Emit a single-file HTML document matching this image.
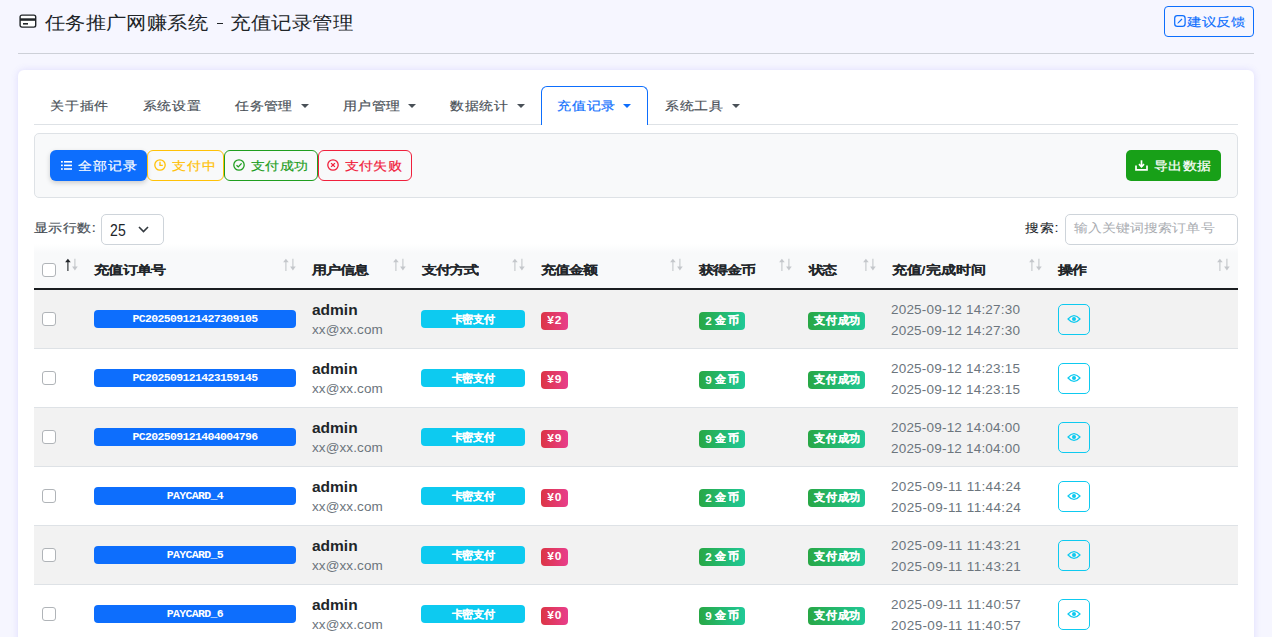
<!DOCTYPE html>
<html><head><meta charset="utf-8"><title>充值记录管理</title>
<style>
*{box-sizing:border-box;margin:0;padding:0}
html,body{width:1272px;height:637px;overflow:hidden}
body{background:#f6f6ff;font-family:"Liberation Sans",sans-serif;color:#212529;position:relative}
.a{position:absolute;white-space:nowrap}
.t{line-height:1}
</style></head><body>
<svg class="a" style="left:19px;top:14px" width="18" height="14" viewBox="0 0 18 14"><rect x="1.1" y="1.1" width="15.6" height="12" rx="1.8" fill="#fff" stroke="#212529" stroke-width="1.4"/><rect x="1" y="4.3" width="16" height="2.5" fill="#212529"/><rect x="4" y="9" width="5" height="1.6" fill="#212529"/></svg>
<div class="a t" style="left:44.65px;top:13.52px;font-size:20.00px;letter-spacing:0.450px;transform:scaleY(0.8873);transform-origin:0 0;color:#212529;">任务推广网赚系统</div>
<div class="a" style="left:217px;top:23px;width:6px;height:1.3px;background:#212529"></div>
<div class="a t" style="left:230.10px;top:13.65px;font-size:20.00px;letter-spacing:0.520px;transform:scaleY(0.8814);transform-origin:0 0;color:#212529;">充值记录管理</div>
<div class="a" style="left:1164px;top:6px;width:90px;height:31px;border:1px solid #0d6efd;border-radius:4px"></div>
<svg class="a" style="left:1173.5px;top:14.8px" width="12" height="12" viewBox="0 0 12 12"><rect x="0.7" y="0.7" width="10.4" height="10.6" rx="2.6" fill="none" stroke="#0d6efd" stroke-width="1.25"/><path d="M3.3 8.7 L4 7.2 L7.6 3.6 L8.4 4.4 L4.8 8 Z" fill="#0d6efd"/></svg>
<div class="a t" style="left:1187.40px;top:15.38px;font-size:15.00px;letter-spacing:-0.500px;transform:scaleY(0.8255);transform-origin:0 0;color:#0d6efd;-webkit-text-stroke:.15px #0d6efd">建议反馈</div>
<div class="a" style="left:18px;top:53px;width:1236px;height:1px;background:#cdd0d8"></div>
<div class="a" style="left:18px;top:70px;width:1236px;height:620px;background:#fff;border-radius:6px;box-shadow:0 0 7px rgba(105,95,245,.17)"></div>
<div class="a" style="left:34px;top:124px;width:1204px;height:1px;background:#dee2e6"></div>
<div class="a" style="left:541px;top:86px;width:107px;height:39px;border:1px solid #0d6efd;border-bottom:none;border-radius:6px 6px 0 0;background:#fff"></div>
<div class="a t" style="left:50.30px;top:100.04px;font-size:14.40px;letter-spacing:0.683px;transform:scaleY(0.8600);transform-origin:0 0;color:#495057;-webkit-text-stroke:.2px #495057">关于插件</div>
<div class="a t" style="left:142.60px;top:100.00px;font-size:14.40px;letter-spacing:0.700px;transform:scaleY(0.8600);transform-origin:0 0;color:#495057;-webkit-text-stroke:.2px #495057">系统设置</div>
<div class="a t" style="left:235.10px;top:99.93px;font-size:14.40px;letter-spacing:0.467px;transform:scaleY(0.8600);transform-origin:0 0;color:#495057;-webkit-text-stroke:.2px #495057">任务管理</div>
<div class="a" style="left:301.3px;top:104px;width:0;height:0;border-top:4px solid #495057;border-left:4px solid transparent;border-right:4px solid transparent"></div>
<div class="a t" style="left:343.00px;top:100.00px;font-size:14.40px;letter-spacing:0.333px;transform:scaleY(0.8600);transform-origin:0 0;color:#495057;-webkit-text-stroke:.2px #495057">用户管理</div>
<div class="a" style="left:408.2px;top:104px;width:0;height:0;border-top:4px solid #495057;border-left:4px solid transparent;border-right:4px solid transparent"></div>
<div class="a t" style="left:450.00px;top:100.00px;font-size:14.40px;letter-spacing:0.683px;transform:scaleY(0.8600);transform-origin:0 0;color:#495057;-webkit-text-stroke:.2px #495057">数据统计</div>
<div class="a" style="left:516.7px;top:104px;width:0;height:0;border-top:4px solid #495057;border-left:4px solid transparent;border-right:4px solid transparent"></div>
<div class="a t" style="left:557.30px;top:100.00px;font-size:14.40px;letter-spacing:0.683px;transform:scaleY(0.8600);transform-origin:0 0;color:#0d6efd;-webkit-text-stroke:.2px #0d6efd">充值记录</div>
<div class="a" style="left:623px;top:104px;width:0;height:0;border-top:4px solid #0d6efd;border-left:4px solid transparent;border-right:4px solid transparent"></div>
<div class="a t" style="left:665.20px;top:100.00px;font-size:14.40px;letter-spacing:0.633px;transform:scaleY(0.8600);transform-origin:0 0;color:#495057;-webkit-text-stroke:.2px #495057">系统工具</div>
<div class="a" style="left:731.8px;top:104px;width:0;height:0;border-top:4px solid #495057;border-left:4px solid transparent;border-right:4px solid transparent"></div>
<div class="a" style="left:34px;top:133px;width:1204px;height:65px;background:#f8f9fa;border:1px solid #dee2e6;border-radius:5px"></div>
<div class="a" style="left:50px;top:150px;width:97px;height:31px;background:#0d6efd;border-radius:6px;box-shadow:0 2px 5px rgba(0,0,0,.18)"></div>
<svg class="a" style="left:61px;top:161px" width="11" height="9" viewBox="0 0 11 9"><g fill="#fff"><rect x="0" y="0" width="1.8" height="1.6"/><rect x="3" y="0" width="8" height="1.6"/><rect x="0" y="3.6" width="1.8" height="1.6"/><rect x="3" y="3.6" width="8" height="1.6"/><rect x="0" y="7.2" width="1.8" height="1.6"/><rect x="3" y="7.2" width="8" height="1.6"/></g></svg>
<div class="a t" style="left:78.00px;top:160.00px;font-size:14.40px;letter-spacing:1.000px;transform:scaleY(0.8600);transform-origin:0 0;color:#fff;-webkit-text-stroke:.2px #fff">全部记录</div>
<div class="a" style="left:147px;top:150px;width:77px;height:31px;border:1px solid #ffc107;border-radius:6px"></div>
<svg class="a" style="left:154px;top:159px" width="12" height="12" viewBox="0 0 12 12"><circle cx="6" cy="6" r="5.2" fill="none" stroke="#ffc107" stroke-width="1.3"/><path d="M6 2.8 V6.3 H8.8" fill="none" stroke="#ffc107" stroke-width="1.3"/></svg>
<div class="a t" style="left:172.00px;top:160.00px;font-size:14.40px;letter-spacing:1.000px;transform:scaleY(0.8600);transform-origin:0 0;color:#ffc107;-webkit-text-stroke:.2px #ffc107">支付中</div>
<div class="a" style="left:224px;top:150px;width:94px;height:31px;border:1px solid #1f9e1f;border-radius:6px"></div>
<svg class="a" style="left:233px;top:159px" width="12" height="12" viewBox="0 0 12 12"><circle cx="6" cy="6" r="5.2" fill="none" stroke="#1f9e1f" stroke-width="1.3"/><path d="M3.5 6.2 L5.3 7.9 L8.6 4.4" fill="none" stroke="#1f9e1f" stroke-width="1.3"/></svg>
<div class="a t" style="left:251.20px;top:159.77px;font-size:14.40px;letter-spacing:0.233px;transform:scaleY(0.8583);transform-origin:0 0;color:#1f9e1f;-webkit-text-stroke:.2px #1f9e1f">支付成功</div>
<div class="a" style="left:318px;top:150px;width:94px;height:31px;border:1px solid #f0203c;border-radius:6px"></div>
<svg class="a" style="left:327px;top:159px" width="12" height="12" viewBox="0 0 12 12"><circle cx="6" cy="6" r="5.2" fill="none" stroke="#f0203c" stroke-width="1.3"/><path d="M4.1 4.1 L7.9 7.9 M7.9 4.1 L4.1 7.9" fill="none" stroke="#f0203c" stroke-width="1.3"/></svg>
<div class="a t" style="left:344.75px;top:160.17px;font-size:14.40px;letter-spacing:0.300px;transform:scaleY(0.8601);transform-origin:0 0;color:#f0203c;-webkit-text-stroke:.2px #f0203c">支付失败</div>
<div class="a" style="left:1126px;top:150px;width:95px;height:31px;background:#18a018;border-radius:5px"></div>
<svg class="a" style="left:1135px;top:160px" width="13" height="11" viewBox="0 0 13 11"><path d="M1 5.5 V9.9 H12 V5.5" fill="none" stroke="#fff" stroke-width="1.7"/><path d="M6.5 0.3 V6.5" stroke="#fff" stroke-width="1.7"/><path d="M4 4.2 L6.5 6.8 L9 4.2" fill="none" stroke="#fff" stroke-width="1.7"/></svg>
<div class="a t" style="left:1154.00px;top:160.00px;font-size:14.40px;letter-spacing:0.483px;transform:scaleY(0.8600);transform-origin:0 0;color:#fff;-webkit-text-stroke:.25px #fff">导出数据</div>
<div class="a" style="left:34px;top:244px;width:1204px;height:44px;background:linear-gradient(#fff 0,#f8f9fa 9px,#f8f9fa 100%)"></div>
<div class="a t" style="left:34.00px;top:222.00px;font-size:14.40px;letter-spacing:0.425px;transform:scaleY(0.8600);transform-origin:0 0;color:#495057;-webkit-text-stroke:.2px #495057">显示行数:</div>
<div class="a" style="left:101px;top:214px;width:63px;height:31px;border:1px solid #ced4da;border-radius:5px;background:#fff"></div>
<div class="a t" style="left:109.5px;top:222px;font-size:15.6px;letter-spacing:.2px;transform:scale(.9,1.04);transform-origin:0 0;color:#212529">25</div>
<svg class="a" style="left:138px;top:226px" width="11" height="7" viewBox="0 0 11 7"><path d="M1 1 L5.5 5.6 L10 1" fill="none" stroke="#343a40" stroke-width="1.6"/></svg>
<div class="a t" style="left:1025.00px;top:222.00px;font-size:14.40px;letter-spacing:0.775px;transform:scaleY(0.8600);transform-origin:0 0;color:#212529;-webkit-text-stroke:.08px #212529">搜索:</div>
<div class="a" style="left:1065px;top:214px;width:173px;height:31px;border:1px solid #ced4da;border-radius:5px;background:#fff"></div>
<div class="a t" style="left:1073.65px;top:222.00px;font-size:14.00px;letter-spacing:0.100px;transform:scaleY(0.8600);transform-origin:0 0;color:#a8abb0;">输入关键词搜索订单号</div>
<div class="a" style="left:34px;top:288px;width:1204px;height:2px;background:#1a1d20"></div>
<div class="a" style="left:42px;top:263px;width:14px;height:14px;border:1px solid #b0b4b8;border-radius:3px;background:#fff"></div>
<svg class="a" style="left:64px;top:258px" width="14" height="13" viewBox="0 0 14 13"><path d="M3.9 12.9 V3" fill="none" stroke="#212529" stroke-width="1.1"/><path d="M1.1 4.3 L3.9 0.8 L6.7 4.3 Z" fill="#212529"/><path d="M10.9 0.8 V10" fill="none" stroke="#c4c7cb" stroke-width="1.1"/><path d="M8.1 8.6 L10.9 12.6 L13.7 8.6 Z" fill="#c4c7cb"/></svg>
<div class="a t" style="left:94.10px;top:264.00px;font-size:14.40px;letter-spacing:0.275px;transform:scaleY(0.8000);transform-origin:0 0;color:#212529;font-weight:900;-webkit-text-stroke:.1px #212529">充值订单号</div>
<svg class="a" style="left:282px;top:258px" width="14" height="13" viewBox="0 0 14 13"><path d="M3.9 12.9 V3" fill="none" stroke="#c4c7cb" stroke-width="1.1"/><path d="M1.1 4.3 L3.9 0.8 L6.7 4.3 Z" fill="#c4c7cb"/><path d="M10.9 0.8 V10" fill="none" stroke="#c4c7cb" stroke-width="1.1"/><path d="M8.1 8.6 L10.9 12.6 L13.7 8.6 Z" fill="#c4c7cb"/></svg>
<div class="a t" style="left:312.35px;top:264.00px;font-size:14.40px;letter-spacing:-0.150px;transform:scaleY(0.8000);transform-origin:0 0;color:#212529;font-weight:900;-webkit-text-stroke:.1px #212529">用户信息</div>
<svg class="a" style="left:392px;top:258px" width="14" height="13" viewBox="0 0 14 13"><path d="M3.9 12.9 V3" fill="none" stroke="#c4c7cb" stroke-width="1.1"/><path d="M1.1 4.3 L3.9 0.8 L6.7 4.3 Z" fill="#c4c7cb"/><path d="M10.9 0.8 V10" fill="none" stroke="#c4c7cb" stroke-width="1.1"/><path d="M8.1 8.6 L10.9 12.6 L13.7 8.6 Z" fill="#c4c7cb"/></svg>
<div class="a t" style="left:422.00px;top:264.00px;font-size:14.40px;letter-spacing:0.083px;transform:scaleY(0.8000);transform-origin:0 0;color:#212529;font-weight:900;-webkit-text-stroke:.1px #212529">支付方式</div>
<svg class="a" style="left:511px;top:258px" width="14" height="13" viewBox="0 0 14 13"><path d="M3.9 12.9 V3" fill="none" stroke="#c4c7cb" stroke-width="1.1"/><path d="M1.1 4.3 L3.9 0.8 L6.7 4.3 Z" fill="#c4c7cb"/><path d="M10.9 0.8 V10" fill="none" stroke="#c4c7cb" stroke-width="1.1"/><path d="M8.1 8.6 L10.9 12.6 L13.7 8.6 Z" fill="#c4c7cb"/></svg>
<div class="a t" style="left:541.00px;top:264.00px;font-size:14.40px;letter-spacing:0.067px;transform:scaleY(0.8000);transform-origin:0 0;color:#212529;font-weight:900;-webkit-text-stroke:.1px #212529">充值金额</div>
<svg class="a" style="left:669px;top:258px" width="14" height="13" viewBox="0 0 14 13"><path d="M3.9 12.9 V3" fill="none" stroke="#c4c7cb" stroke-width="1.1"/><path d="M1.1 4.3 L3.9 0.8 L6.7 4.3 Z" fill="#c4c7cb"/><path d="M10.9 0.8 V10" fill="none" stroke="#c4c7cb" stroke-width="1.1"/><path d="M8.1 8.6 L10.9 12.6 L13.7 8.6 Z" fill="#c4c7cb"/></svg>
<div class="a t" style="left:698.50px;top:264.00px;font-size:14.40px;letter-spacing:0.050px;transform:scaleY(0.8000);transform-origin:0 0;color:#212529;font-weight:900;-webkit-text-stroke:.1px #212529">获得金币</div>
<svg class="a" style="left:778px;top:258px" width="14" height="13" viewBox="0 0 14 13"><path d="M3.9 12.9 V3" fill="none" stroke="#c4c7cb" stroke-width="1.1"/><path d="M1.1 4.3 L3.9 0.8 L6.7 4.3 Z" fill="#c4c7cb"/><path d="M10.9 0.8 V10" fill="none" stroke="#c4c7cb" stroke-width="1.1"/><path d="M8.1 8.6 L10.9 12.6 L13.7 8.6 Z" fill="#c4c7cb"/></svg>
<div class="a t" style="left:808.95px;top:264.00px;font-size:14.40px;letter-spacing:-0.500px;transform:scaleY(0.8000);transform-origin:0 0;color:#212529;font-weight:900;-webkit-text-stroke:.1px #212529">状态</div>
<svg class="a" style="left:862px;top:258px" width="14" height="13" viewBox="0 0 14 13"><path d="M3.9 12.9 V3" fill="none" stroke="#c4c7cb" stroke-width="1.1"/><path d="M1.1 4.3 L3.9 0.8 L6.7 4.3 Z" fill="#c4c7cb"/><path d="M10.9 0.8 V10" fill="none" stroke="#c4c7cb" stroke-width="1.1"/><path d="M8.1 8.6 L10.9 12.6 L13.7 8.6 Z" fill="#c4c7cb"/></svg>
<div class="a t" style="left:892.00px;top:264.00px;font-size:14.40px;letter-spacing:0.757px;transform:scaleY(0.8000);transform-origin:0 0;color:#212529;font-weight:900;-webkit-text-stroke:.1px #212529">充值/完成时间</div>
<svg class="a" style="left:1028px;top:258px" width="14" height="13" viewBox="0 0 14 13"><path d="M3.9 12.9 V3" fill="none" stroke="#c4c7cb" stroke-width="1.1"/><path d="M1.1 4.3 L3.9 0.8 L6.7 4.3 Z" fill="#c4c7cb"/><path d="M10.9 0.8 V10" fill="none" stroke="#c4c7cb" stroke-width="1.1"/><path d="M8.1 8.6 L10.9 12.6 L13.7 8.6 Z" fill="#c4c7cb"/></svg>
<div class="a t" style="left:1057.90px;top:264.00px;font-size:14.40px;letter-spacing:0.300px;transform:scaleY(0.8000);transform-origin:0 0;color:#212529;font-weight:900;-webkit-text-stroke:.1px #212529">操作</div>
<svg class="a" style="left:1216px;top:258px" width="14" height="13" viewBox="0 0 14 13"><path d="M3.9 12.9 V3" fill="none" stroke="#c4c7cb" stroke-width="1.1"/><path d="M1.1 4.3 L3.9 0.8 L6.7 4.3 Z" fill="#c4c7cb"/><path d="M10.9 0.8 V10" fill="none" stroke="#c4c7cb" stroke-width="1.1"/><path d="M8.1 8.6 L10.9 12.6 L13.7 8.6 Z" fill="#c4c7cb"/></svg>
<div class="a" style="left:34px;top:290px;width:1204px;height:59px;background:#f2f2f2;border-bottom:1px solid #dee2e6"></div>
<div class="a" style="left:42px;top:312px;width:14px;height:14px;border:1px solid #b0b4b8;border-radius:3px;background:#fff"></div>
<div class="a" style="left:94px;top:310px;width:202px;height:18px;border-radius:4px;background:#0d6efd"></div>
<div class="a t" style="left:94px;top:313px;width:202px;text-align:center;font-family:'Liberation Mono',monospace;font-weight:bold;font-size:11.5px;letter-spacing:-.65px;color:#fff">PC202509121427309105</div>
<div class="a t" style="left:312px;top:302px;font-size:15.5px;font-weight:bold;color:#212529">admin</div>
<div class="a t" style="left:312px;top:323px;font-size:13.5px;letter-spacing:.1px;color:#6c757d">xx@xx.com</div>
<div class="a" style="left:421px;top:310px;width:104px;height:18px;border-radius:4px;background:#0dcaf0"></div>
<div class="a t" style="left:451.50px;top:314.15px;font-size:10.60px;letter-spacing:-0.167px;color:#fff;font-weight:900;-webkit-text-stroke:.12px #fff">卡密支付</div>
<div class="a" style="left:541px;top:312px;width:27px;height:18px;border-radius:4px;background:linear-gradient(90deg,#dc3545,#e83e8c)"></div>
<div class="a t" style="left:547.35px;top:315.48px;font-size:12.00px;letter-spacing:0.650px;transform:scaleY(0.8955);transform-origin:0 0;color:#fff;font-weight:bold">¥2</div>
<div class="a" style="left:699px;top:312px;width:46px;height:18px;border-radius:4px;background:linear-gradient(90deg,#28a745,#20c997)"></div>
<div class="a t" style="left:705.3px;top:314.50px;font-size:11.6px;font-weight:bold;color:#fff">2</div>
<div class="a t" style="left:715.00px;top:315.05px;font-size:10.80px;letter-spacing:1.800px;color:#fff;font-weight:900;-webkit-text-stroke:.15px #fff">金币</div>
<div class="a" style="left:808px;top:312px;width:57px;height:18px;border-radius:4px;background:linear-gradient(90deg,#28a745,#20c997)"></div>
<div class="a t" style="left:814.00px;top:314.75px;font-size:10.80px;letter-spacing:0.800px;color:#fff;font-weight:900;-webkit-text-stroke:.15px #fff">支付成功</div>
<div class="a t" style="left:891px;top:303px;font-size:13.5px;letter-spacing:0.20px;color:#6c757d">2025-09-12 14:27:30</div>
<div class="a t" style="left:891px;top:324px;font-size:13.5px;letter-spacing:0.20px;color:#6c757d">2025-09-12 14:27:30</div>
<div class="a" style="left:1058px;top:304px;width:32px;height:31px;border:1px solid #0dcaf0;border-radius:5px"></div>
<svg class="a" style="left:1067px;top:314px" width="14" height="10" viewBox="0 0 14 10"><path d="M1 5 Q7 -1.8 13 5 Q7 11.8 1 5 Z" fill="none" stroke="#0dcaf0" stroke-width="1.15"/><circle cx="7" cy="5" r="2" fill="#0dcaf0"/></svg>
<div class="a" style="left:34px;top:349px;width:1204px;height:59px;background:#fff;border-bottom:1px solid #dee2e6"></div>
<div class="a" style="left:42px;top:371px;width:14px;height:14px;border:1px solid #b0b4b8;border-radius:3px;background:#fff"></div>
<div class="a" style="left:94px;top:369px;width:202px;height:18px;border-radius:4px;background:#0d6efd"></div>
<div class="a t" style="left:94px;top:372px;width:202px;text-align:center;font-family:'Liberation Mono',monospace;font-weight:bold;font-size:11.5px;letter-spacing:-.65px;color:#fff">PC202509121423159145</div>
<div class="a t" style="left:312px;top:361px;font-size:15.5px;font-weight:bold;color:#212529">admin</div>
<div class="a t" style="left:312px;top:382px;font-size:13.5px;letter-spacing:.1px;color:#6c757d">xx@xx.com</div>
<div class="a" style="left:421px;top:369px;width:104px;height:18px;border-radius:4px;background:#0dcaf0"></div>
<div class="a t" style="left:451.50px;top:373.15px;font-size:10.60px;letter-spacing:-0.167px;color:#fff;font-weight:900;-webkit-text-stroke:.12px #fff">卡密支付</div>
<div class="a" style="left:541px;top:371px;width:27px;height:18px;border-radius:4px;background:linear-gradient(90deg,#dc3545,#e83e8c)"></div>
<div class="a t" style="left:547.35px;top:374.48px;font-size:12.00px;letter-spacing:0.650px;transform:scaleY(0.8955);transform-origin:0 0;color:#fff;font-weight:bold">¥9</div>
<div class="a" style="left:699px;top:371px;width:46px;height:18px;border-radius:4px;background:linear-gradient(90deg,#28a745,#20c997)"></div>
<div class="a t" style="left:705.3px;top:373.50px;font-size:11.6px;font-weight:bold;color:#fff">9</div>
<div class="a t" style="left:715.00px;top:374.05px;font-size:10.80px;letter-spacing:1.800px;color:#fff;font-weight:900;-webkit-text-stroke:.15px #fff">金币</div>
<div class="a" style="left:808px;top:371px;width:57px;height:18px;border-radius:4px;background:linear-gradient(90deg,#28a745,#20c997)"></div>
<div class="a t" style="left:814.00px;top:373.75px;font-size:10.80px;letter-spacing:0.800px;color:#fff;font-weight:900;-webkit-text-stroke:.15px #fff">支付成功</div>
<div class="a t" style="left:891px;top:362px;font-size:13.5px;letter-spacing:0.20px;color:#6c757d">2025-09-12 14:23:15</div>
<div class="a t" style="left:891px;top:383px;font-size:13.5px;letter-spacing:0.20px;color:#6c757d">2025-09-12 14:23:15</div>
<div class="a" style="left:1058px;top:363px;width:32px;height:31px;border:1px solid #0dcaf0;border-radius:5px"></div>
<svg class="a" style="left:1067px;top:373px" width="14" height="10" viewBox="0 0 14 10"><path d="M1 5 Q7 -1.8 13 5 Q7 11.8 1 5 Z" fill="none" stroke="#0dcaf0" stroke-width="1.15"/><circle cx="7" cy="5" r="2" fill="#0dcaf0"/></svg>
<div class="a" style="left:34px;top:408px;width:1204px;height:59px;background:#f2f2f2;border-bottom:1px solid #dee2e6"></div>
<div class="a" style="left:42px;top:430px;width:14px;height:14px;border:1px solid #b0b4b8;border-radius:3px;background:#fff"></div>
<div class="a" style="left:94px;top:428px;width:202px;height:18px;border-radius:4px;background:#0d6efd"></div>
<div class="a t" style="left:94px;top:431px;width:202px;text-align:center;font-family:'Liberation Mono',monospace;font-weight:bold;font-size:11.5px;letter-spacing:-.65px;color:#fff">PC202509121404004796</div>
<div class="a t" style="left:312px;top:420px;font-size:15.5px;font-weight:bold;color:#212529">admin</div>
<div class="a t" style="left:312px;top:441px;font-size:13.5px;letter-spacing:.1px;color:#6c757d">xx@xx.com</div>
<div class="a" style="left:421px;top:428px;width:104px;height:18px;border-radius:4px;background:#0dcaf0"></div>
<div class="a t" style="left:451.50px;top:432.15px;font-size:10.60px;letter-spacing:-0.167px;color:#fff;font-weight:900;-webkit-text-stroke:.12px #fff">卡密支付</div>
<div class="a" style="left:541px;top:430px;width:27px;height:18px;border-radius:4px;background:linear-gradient(90deg,#dc3545,#e83e8c)"></div>
<div class="a t" style="left:547.35px;top:433.48px;font-size:12.00px;letter-spacing:0.650px;transform:scaleY(0.8955);transform-origin:0 0;color:#fff;font-weight:bold">¥9</div>
<div class="a" style="left:699px;top:430px;width:46px;height:18px;border-radius:4px;background:linear-gradient(90deg,#28a745,#20c997)"></div>
<div class="a t" style="left:705.3px;top:432.50px;font-size:11.6px;font-weight:bold;color:#fff">9</div>
<div class="a t" style="left:715.00px;top:433.05px;font-size:10.80px;letter-spacing:1.800px;color:#fff;font-weight:900;-webkit-text-stroke:.15px #fff">金币</div>
<div class="a" style="left:808px;top:430px;width:57px;height:18px;border-radius:4px;background:linear-gradient(90deg,#28a745,#20c997)"></div>
<div class="a t" style="left:814.00px;top:432.75px;font-size:10.80px;letter-spacing:0.800px;color:#fff;font-weight:900;-webkit-text-stroke:.15px #fff">支付成功</div>
<div class="a t" style="left:891px;top:421px;font-size:13.5px;letter-spacing:0.20px;color:#6c757d">2025-09-12 14:04:00</div>
<div class="a t" style="left:891px;top:442px;font-size:13.5px;letter-spacing:0.20px;color:#6c757d">2025-09-12 14:04:00</div>
<div class="a" style="left:1058px;top:422px;width:32px;height:31px;border:1px solid #0dcaf0;border-radius:5px"></div>
<svg class="a" style="left:1067px;top:432px" width="14" height="10" viewBox="0 0 14 10"><path d="M1 5 Q7 -1.8 13 5 Q7 11.8 1 5 Z" fill="none" stroke="#0dcaf0" stroke-width="1.15"/><circle cx="7" cy="5" r="2" fill="#0dcaf0"/></svg>
<div class="a" style="left:34px;top:467px;width:1204px;height:59px;background:#fff;border-bottom:1px solid #dee2e6"></div>
<div class="a" style="left:42px;top:489px;width:14px;height:14px;border:1px solid #b0b4b8;border-radius:3px;background:#fff"></div>
<div class="a" style="left:94px;top:487px;width:202px;height:18px;border-radius:4px;background:#0d6efd"></div>
<div class="a t" style="left:94px;top:490px;width:202px;text-align:center;font-family:'Liberation Mono',monospace;font-weight:bold;font-size:11.5px;letter-spacing:-.65px;color:#fff">PAYCARD_4</div>
<div class="a t" style="left:312px;top:479px;font-size:15.5px;font-weight:bold;color:#212529">admin</div>
<div class="a t" style="left:312px;top:500px;font-size:13.5px;letter-spacing:.1px;color:#6c757d">xx@xx.com</div>
<div class="a" style="left:421px;top:487px;width:104px;height:18px;border-radius:4px;background:#0dcaf0"></div>
<div class="a t" style="left:451.50px;top:491.15px;font-size:10.60px;letter-spacing:-0.167px;color:#fff;font-weight:900;-webkit-text-stroke:.12px #fff">卡密支付</div>
<div class="a" style="left:541px;top:489px;width:27px;height:18px;border-radius:4px;background:linear-gradient(90deg,#dc3545,#e83e8c)"></div>
<div class="a t" style="left:547.35px;top:492.48px;font-size:12.00px;letter-spacing:0.650px;transform:scaleY(0.8955);transform-origin:0 0;color:#fff;font-weight:bold">¥0</div>
<div class="a" style="left:699px;top:489px;width:46px;height:18px;border-radius:4px;background:linear-gradient(90deg,#28a745,#20c997)"></div>
<div class="a t" style="left:705.3px;top:491.50px;font-size:11.6px;font-weight:bold;color:#fff">2</div>
<div class="a t" style="left:715.00px;top:492.05px;font-size:10.80px;letter-spacing:1.800px;color:#fff;font-weight:900;-webkit-text-stroke:.15px #fff">金币</div>
<div class="a" style="left:808px;top:489px;width:57px;height:18px;border-radius:4px;background:linear-gradient(90deg,#28a745,#20c997)"></div>
<div class="a t" style="left:814.00px;top:491.75px;font-size:10.80px;letter-spacing:0.800px;color:#fff;font-weight:900;-webkit-text-stroke:.15px #fff">支付成功</div>
<div class="a t" style="left:891px;top:480px;font-size:13.5px;letter-spacing:0.36px;color:#6c757d">2025-09-11 11:44:24</div>
<div class="a t" style="left:891px;top:501px;font-size:13.5px;letter-spacing:0.36px;color:#6c757d">2025-09-11 11:44:24</div>
<div class="a" style="left:1058px;top:481px;width:32px;height:31px;border:1px solid #0dcaf0;border-radius:5px"></div>
<svg class="a" style="left:1067px;top:491px" width="14" height="10" viewBox="0 0 14 10"><path d="M1 5 Q7 -1.8 13 5 Q7 11.8 1 5 Z" fill="none" stroke="#0dcaf0" stroke-width="1.15"/><circle cx="7" cy="5" r="2" fill="#0dcaf0"/></svg>
<div class="a" style="left:34px;top:526px;width:1204px;height:59px;background:#f2f2f2;border-bottom:1px solid #dee2e6"></div>
<div class="a" style="left:42px;top:548px;width:14px;height:14px;border:1px solid #b0b4b8;border-radius:3px;background:#fff"></div>
<div class="a" style="left:94px;top:546px;width:202px;height:18px;border-radius:4px;background:#0d6efd"></div>
<div class="a t" style="left:94px;top:549px;width:202px;text-align:center;font-family:'Liberation Mono',monospace;font-weight:bold;font-size:11.5px;letter-spacing:-.65px;color:#fff">PAYCARD_5</div>
<div class="a t" style="left:312px;top:538px;font-size:15.5px;font-weight:bold;color:#212529">admin</div>
<div class="a t" style="left:312px;top:559px;font-size:13.5px;letter-spacing:.1px;color:#6c757d">xx@xx.com</div>
<div class="a" style="left:421px;top:546px;width:104px;height:18px;border-radius:4px;background:#0dcaf0"></div>
<div class="a t" style="left:451.50px;top:550.15px;font-size:10.60px;letter-spacing:-0.167px;color:#fff;font-weight:900;-webkit-text-stroke:.12px #fff">卡密支付</div>
<div class="a" style="left:541px;top:548px;width:27px;height:18px;border-radius:4px;background:linear-gradient(90deg,#dc3545,#e83e8c)"></div>
<div class="a t" style="left:547.35px;top:551.48px;font-size:12.00px;letter-spacing:0.650px;transform:scaleY(0.8955);transform-origin:0 0;color:#fff;font-weight:bold">¥0</div>
<div class="a" style="left:699px;top:548px;width:46px;height:18px;border-radius:4px;background:linear-gradient(90deg,#28a745,#20c997)"></div>
<div class="a t" style="left:705.3px;top:550.50px;font-size:11.6px;font-weight:bold;color:#fff">2</div>
<div class="a t" style="left:715.00px;top:551.05px;font-size:10.80px;letter-spacing:1.800px;color:#fff;font-weight:900;-webkit-text-stroke:.15px #fff">金币</div>
<div class="a" style="left:808px;top:548px;width:57px;height:18px;border-radius:4px;background:linear-gradient(90deg,#28a745,#20c997)"></div>
<div class="a t" style="left:814.00px;top:550.75px;font-size:10.80px;letter-spacing:0.800px;color:#fff;font-weight:900;-webkit-text-stroke:.15px #fff">支付成功</div>
<div class="a t" style="left:891px;top:539px;font-size:13.5px;letter-spacing:0.36px;color:#6c757d">2025-09-11 11:43:21</div>
<div class="a t" style="left:891px;top:560px;font-size:13.5px;letter-spacing:0.36px;color:#6c757d">2025-09-11 11:43:21</div>
<div class="a" style="left:1058px;top:540px;width:32px;height:31px;border:1px solid #0dcaf0;border-radius:5px"></div>
<svg class="a" style="left:1067px;top:550px" width="14" height="10" viewBox="0 0 14 10"><path d="M1 5 Q7 -1.8 13 5 Q7 11.8 1 5 Z" fill="none" stroke="#0dcaf0" stroke-width="1.15"/><circle cx="7" cy="5" r="2" fill="#0dcaf0"/></svg>
<div class="a" style="left:34px;top:585px;width:1204px;height:59px;background:#fff;border-bottom:1px solid #dee2e6"></div>
<div class="a" style="left:42px;top:607px;width:14px;height:14px;border:1px solid #b0b4b8;border-radius:3px;background:#fff"></div>
<div class="a" style="left:94px;top:605px;width:202px;height:18px;border-radius:4px;background:#0d6efd"></div>
<div class="a t" style="left:94px;top:608px;width:202px;text-align:center;font-family:'Liberation Mono',monospace;font-weight:bold;font-size:11.5px;letter-spacing:-.65px;color:#fff">PAYCARD_6</div>
<div class="a t" style="left:312px;top:597px;font-size:15.5px;font-weight:bold;color:#212529">admin</div>
<div class="a t" style="left:312px;top:618px;font-size:13.5px;letter-spacing:.1px;color:#6c757d">xx@xx.com</div>
<div class="a" style="left:421px;top:605px;width:104px;height:18px;border-radius:4px;background:#0dcaf0"></div>
<div class="a t" style="left:451.50px;top:609.15px;font-size:10.60px;letter-spacing:-0.167px;color:#fff;font-weight:900;-webkit-text-stroke:.12px #fff">卡密支付</div>
<div class="a" style="left:541px;top:607px;width:27px;height:18px;border-radius:4px;background:linear-gradient(90deg,#dc3545,#e83e8c)"></div>
<div class="a t" style="left:547.35px;top:610.48px;font-size:12.00px;letter-spacing:0.650px;transform:scaleY(0.8955);transform-origin:0 0;color:#fff;font-weight:bold">¥0</div>
<div class="a" style="left:699px;top:607px;width:46px;height:18px;border-radius:4px;background:linear-gradient(90deg,#28a745,#20c997)"></div>
<div class="a t" style="left:705.3px;top:609.50px;font-size:11.6px;font-weight:bold;color:#fff">9</div>
<div class="a t" style="left:715.00px;top:610.05px;font-size:10.80px;letter-spacing:1.800px;color:#fff;font-weight:900;-webkit-text-stroke:.15px #fff">金币</div>
<div class="a" style="left:808px;top:607px;width:57px;height:18px;border-radius:4px;background:linear-gradient(90deg,#28a745,#20c997)"></div>
<div class="a t" style="left:814.00px;top:609.75px;font-size:10.80px;letter-spacing:0.800px;color:#fff;font-weight:900;-webkit-text-stroke:.15px #fff">支付成功</div>
<div class="a t" style="left:891px;top:598px;font-size:13.5px;letter-spacing:0.36px;color:#6c757d">2025-09-11 11:40:57</div>
<div class="a t" style="left:891px;top:619px;font-size:13.5px;letter-spacing:0.36px;color:#6c757d">2025-09-11 11:40:57</div>
<div class="a" style="left:1058px;top:599px;width:32px;height:31px;border:1px solid #0dcaf0;border-radius:5px"></div>
<svg class="a" style="left:1067px;top:609px" width="14" height="10" viewBox="0 0 14 10"><path d="M1 5 Q7 -1.8 13 5 Q7 11.8 1 5 Z" fill="none" stroke="#0dcaf0" stroke-width="1.15"/><circle cx="7" cy="5" r="2" fill="#0dcaf0"/></svg>
</body></html>
